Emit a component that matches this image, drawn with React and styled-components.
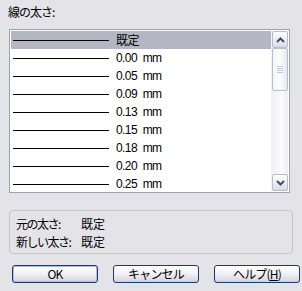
import React from 'react';
import styled, { createGlobalStyle } from 'styled-components';

const GlobalStyle = createGlobalStyle`
  html, body {
    margin: 0;
    padding: 0;
    background: #e3e3e8;
  }
  body {
    font-family: "Liberation Sans", "Noto Sans CJK JP", sans-serif;
    font-size: 12px;
    color: #000;
  }
`;

const widths = ['0.00', '0.05', '0.09', '0.13', '0.15', '0.18', '0.20', '0.25'];

const Dialog = styled.div`
  width: 302px;
  height: 291px;
  display: flex;
  flex-direction: column;
  box-sizing: border-box;
  padding-top: 5px;
`;

const Label = styled.div`
  margin-left: 8px;
  height: 14px;
  line-height: 14px;
  font-family: "Noto Sans CJK JP", sans-serif;
  font-size: 12px;
  letter-spacing: -1px;
`;

const ListBox = styled.div`
  margin: 10px 0 0 9px;
  width: 281px;
  height: 164px;
  box-sizing: border-box;
  border: 1px solid #9aa3b3;
  background: #fff;
  display: flex;
  padding: 1px;
`;

const Rows = styled.div`
  flex: 1;
  display: flex;
  flex-direction: column;
`;

const Row = styled.div`
  height: 18px;
  display: flex;
  align-items: center;
  background: ${p => (p.$selected ? '#b4b7c3' : 'transparent')};
  padding-left: 2px;
`;

const Line = styled.div`
  width: 96px;
  height: 1px;
  background: #000;
  margin-right: 7px;
`;

const RowText = styled.span`
  font-size: 12px;
  letter-spacing: -0.6px;
  word-spacing: 3px;
  font-family: ${p => (p.$jp ? '"Noto Sans CJK JP", sans-serif' : '"Liberation Sans", sans-serif')};
  line-height: 18px;
`;

const Scrollbar = styled.div`
  width: 16px;
  display: flex;
  flex-direction: column;
  background: linear-gradient(to right, #f0f0f4, #fbfbfd 60%, #eeeef2);
  border-left: 1px solid #f4f4f7;
`;

const ArrowButton = styled.div`
  height: 17px;
  box-sizing: border-box;
  border: 1px solid #b9bccb;
  border-radius: 2px;
  background: linear-gradient(to bottom, #ffffff, #e6e7ee 70%, #d8d9e2);
  display: flex;
  align-items: center;
  justify-content: center;
`;

const Thumb = styled.div`
  height: 43px;
  box-sizing: border-box;
  border: 1px solid #b9bccb;
  border-radius: 2px;
  background: linear-gradient(to right, #f4f4f8, #fdfdff 50%, #e6e7ee);
  display: flex;
  flex-direction: column;
  align-items: center;
  justify-content: center;
  gap: 1px;
`;

const Grip = styled.div`
  width: 6px;
  height: 1px;
  background: #c4c6d2;
`;

const Track = styled.div`
  flex: 1;
`;

const GroupBox = styled.div`
  margin: 17px 0 0 9px;
  width: 284px;
  height: 44px;
  box-sizing: border-box;
  border: 1px solid #c3c3c8;
  border-radius: 4px;
  padding: 4px 0 0 6px;
  font-family: "Noto Sans CJK JP", sans-serif;
  font-size: 12px;
`;

const InfoRow = styled.div`
  display: flex;
  height: 18px;
  line-height: 18px;
`;

const InfoKey = styled.span`
  width: 65px;
  flex-shrink: 0;
  letter-spacing: -1.5px;
`;

const ButtonRow = styled.div`
  margin: 11px 0 0 12px;
  display: flex;
  gap: 15px;
`;

const Button = styled.div`
  width: 86px;
  height: 18px;
  box-sizing: border-box;
  border: 1px solid #1c3a6e;
  border-radius: 3px;
  background: linear-gradient(to bottom, #ffffff, #f2f2f6 45%, #dcdde6 85%, #c9cbd8);
  box-shadow: ${p => (p.$default ? 'inset 0 0 0 1px #a8c0e8' : 'none')};
  display: flex;
  align-items: center;
  justify-content: center;
  font-family: "Noto Sans CJK JP", sans-serif;
  font-size: 12px;
  letter-spacing: -0.8px;
  line-height: 16px;
`;

const Chevron = ({ up }) => (
  <svg width="9" height="6" viewBox="0 0 9 6">
    <path
      d={up ? 'M1 5 L4.5 1.5 L8 5' : 'M1 1 L4.5 4.5 L8 1'}
      fill="none"
      stroke="#3f4f70"
      strokeWidth="2"
    />
  </svg>
);

export default function App() {
  return (
    <>
      <GlobalStyle />
      <Dialog>
        <Label>線の太さ:</Label>
        <ListBox>
          <Rows>
            <Row $selected>
              <Line />
              <RowText $jp>既定</RowText>
            </Row>
            {widths.map(w => (
              <Row key={w}>
                <Line />
                <RowText>{w} mm</RowText>
              </Row>
            ))}
          </Rows>
          <Scrollbar>
            <ArrowButton><Chevron up /></ArrowButton>
            <Thumb>
              <Grip /><Grip /><Grip /><Grip />
            </Thumb>
            <Track />
            <ArrowButton><Chevron /></ArrowButton>
          </Scrollbar>
        </ListBox>
        <GroupBox>
          <InfoRow>
            <InfoKey>元の太さ:</InfoKey>
            <span>既定</span>
          </InfoRow>
          <InfoRow>
            <InfoKey>新しい太さ:</InfoKey>
            <span>既定</span>
          </InfoRow>
        </GroupBox>
        <ButtonRow>
          <Button $default>OK</Button>
          <Button>キャンセル</Button>
          <Button>ヘルプ(<u>H</u>)</Button>
        </ButtonRow>
      </Dialog>
    </>
  );
}
